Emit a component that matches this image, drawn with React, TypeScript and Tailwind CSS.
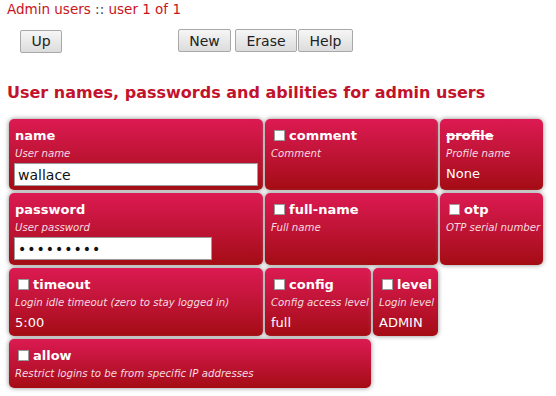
import React from "react";

type CellProps = {
  title: string;
  hint: string;
  check?: boolean;
  strike?: boolean;
  value?: string;
  className?: string;
  children?: React.ReactNode;
};

const Box = () => (
  <span className="inline-block w-[11px] h-[11px] bg-white border border-[#9a9a9a] ml-[3px] mr-[4px] shrink-0" />
);

const Cell = ({ title, hint, check, strike, value, className, children }: CellProps) => {
  return (
    <div
      className={
        "rounded-[5px] bg-gradient-to-b from-[#dc1a52] to-[#a40c12] shadow-[0_0_5px_#8a8a8a] px-[6px] pt-[9px] text-white " +
        (className ?? "")
      }
    >
      <div className="flex items-center text-[13px] leading-[15px] font-bold">
        {check ? <Box /> : null}
        <span className={strike ? "line-through" : ""}>{title}</span>
      </div>
      <div className="text-[10.2px] leading-[13px] italic mt-[4px] text-[#f6dbe0] whitespace-nowrap">{hint}</div>
      {value !== undefined ? <div className="text-[13px] leading-[16px] mt-[6px]">{value}</div> : null}
      {children}
    </div>
  );
};

const Btn = ({ label, w }: { label: string; w: string }) => (
  <button
    className={
      "h-[23px] border border-[#a8a8a8] rounded-[2px] bg-gradient-to-b from-[#f6f6f6] to-[#dcdcdc] text-[14px] text-[#222] leading-none " +
      w
    }
  >
    {label}
  </button>
);

export default function App() {
  return (
    <div className="w-[556px] h-[396px] bg-white font-['DejaVu_Sans',sans-serif] overflow-hidden">
      <div className="pl-[7px] pt-[1px] text-[13.5px] leading-[16px] text-[#c8141c]">
        Admin users <span className="text-[#444]">::</span> user 1 of 1
      </div>
      <div className="flex mt-[12px]">
        <div className="ml-[20px]">
          <Btn label="Up" w="w-[42px]" />
        </div>
        <div className="ml-[116px] flex">
          <Btn label="New" w="w-[53px]" />
          <div className="ml-[4px] flex gap-[1px]">
            <Btn label="Erase" w="w-[62px]" />
            <Btn label="Help" w="w-[55px]" />
          </div>
        </div>
      </div>
      <h1 className="pl-[7px] mt-[30px] text-[16px] leading-[20px] font-bold text-[#c3122b]">
        User names, passwords and abilities for admin users
      </h1>
      <div className="ml-[9px] mt-[16px] grid grid-cols-[254px_106px_65px_103px] grid-rows-[71px_72px_68px_49px] gap-x-[2px] gap-y-[3px]">
        <Cell title="name" hint="User name">
          <input
            readOnly
            value="wallace"
            className="mt-[3px] w-[244px] h-[23px] -ml-[1px] bg-white border border-[#9c9c9c] text-[14px] text-[#111] px-[3px] outline-none"
          />
        </Cell>
        <Cell title="comment" hint="Comment" check className="col-span-2" />
        <Cell title="profile" hint="Profile name" strike value="None" />
        <Cell title="password" hint="User password">
          <input
            readOnly
            type="password"
            value="wallace12"
            className="mt-[3px] w-[198px] h-[23px] -ml-[1px] bg-white border border-[#9c9c9c] text-[14px] text-[#111] px-[3px] outline-none tracking-[1px]"
          />
        </Cell>
        <Cell title="full-name" hint="Full name" check className="col-span-2" />
        <Cell title="otp" hint="OTP serial number" check />
        <Cell title="timeout" hint="Login idle timeout (zero to stay logged in)" check value="5:00" />
        <Cell title="config" hint="Config access level" check value="full" />
        <Cell title="level" hint="Login level" check value="ADMIN" />
        <div />
        <Cell title="allow" hint="Restrict logins to be from specific IP addresses" check className="col-span-2" />
      </div>
    </div>
  );
}
